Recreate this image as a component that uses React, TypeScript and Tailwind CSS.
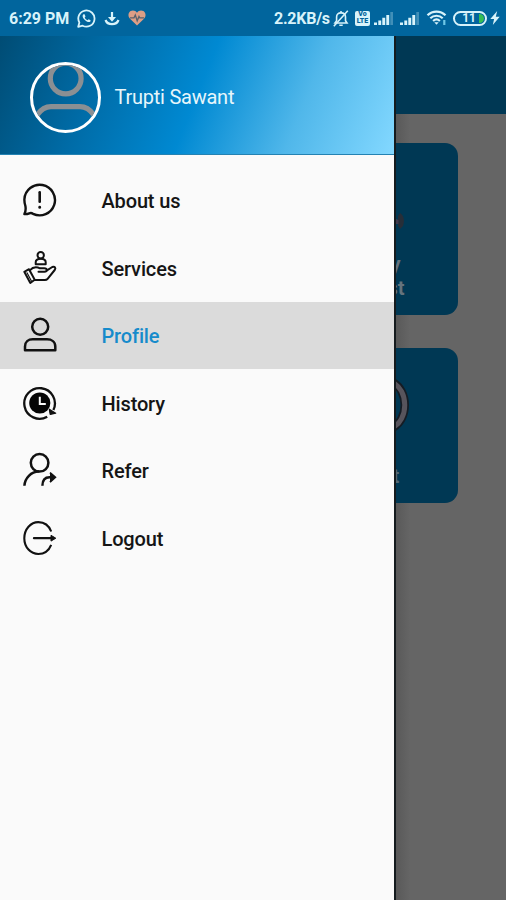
import type { ReactNode } from 'react';
import { clsx } from 'clsx';

interface MenuItem {
  key: string;
  label: string;
  icon: ReactNode;
}

const AboutIcon = () => (
  <svg className="w-9 h-9" viewBox="0 0 36 36" fill="none" stroke="#111" strokeWidth="2.4" strokeLinecap="round" strokeLinejoin="round">
    <path d="M2.4 17.2A15.3 15.3 0 1 1 11 31.8C9.5 30.7 8.5 30.8 7.3 31.3C5.6 32 4 32.3 2.4 32.1C3.5 30 4 27.5 3.4 24C2.6 21.5 2.3 19.5 2.4 17.2Z" />
    <path d="M17.7 10.3V19.8" strokeWidth="2.6" />
    <path d="M17.7 25.2V25.4" strokeWidth="2.8" />
  </svg>
);

const ServicesIcon = () => (
  <svg className="w-9 h-9" viewBox="0 0 36 36" fill="none" stroke="#111" strokeWidth="2" strokeLinecap="round" strokeLinejoin="round">
    <circle cx="18.7" cy="5.2" r="3.2" />
    <path d="M13.7 14.2V12.3C13.7 9.6 15.7 8.7 18.7 8.7C21.7 8.7 23.7 9.6 23.7 12.3V14.2Z" />
    <path d="M2.3 21.8L7 19.2L12.7 29.8L8.3 33Z" />
    <path d="M5 22.8L9.4 31" strokeWidth="1.2" />
    <path d="M7.8 20.3C10.4 17.4 14 16.4 18 18.3H22.3C25.6 18.3 25.4 21.8 22.5 21.8H16.5" />
    <path d="M25 20.3L30.3 17C32.7 16 34.2 18.2 32.7 20L25.6 28.8C24.8 29.8 24 30 22.8 30H12.8" />
  </svg>
);

const ProfileIcon = () => (
  <svg className="w-9 h-9" viewBox="0 0 36 36" fill="none" stroke="#111" strokeWidth="2.5" strokeLinejoin="round">
    <circle cx="18.2" cy="9.8" r="8" />
    <path d="M3 33.2V29.5C3 24.8 6.3 22.3 10.8 22.3H25C29.5 22.3 33.3 24.8 33.3 29.5V33.2Z" />
  </svg>
);

const HistoryIcon = () => (
  <svg className="w-9 h-9" viewBox="0 0 36 36" fill="none" stroke="#111" strokeWidth="2.3">
    <path d="M31.4 25A15.3 15.3 0 1 0 25.2 31.7" />
    <path d="M27.3 24.2L33.7 28.2L28.2 29.4Z" fill="#111" strokeWidth="1.2" strokeLinejoin="round" />
    <circle cx="17.8" cy="18" r="10.6" fill="#050505" stroke="none" />
    <path d="M17.8 11.8V18.9H23.8" stroke="#fafafa" strokeWidth="2" />
  </svg>
);

const ReferIcon = () => (
  <svg className="w-9 h-9" viewBox="0 0 36 36" fill="none" stroke="#111" strokeWidth="2.5">
    <circle cx="17.6" cy="10.8" r="8.8" />
    <path d="M2.4 33.8C2.8 26.2 9 19.4 17.2 19.6" />
    <path d="M20.4 33.7C20.5 28.2 22.9 25.3 27.5 25.3H31" />
    <path d="M28 20.6L33.3 25.3L28 30.2" strokeLinejoin="miter" fill="#111" strokeWidth="1.8" />
  </svg>
);

const LogoutIcon = () => (
  <svg className="w-9 h-9" viewBox="0 0 36 36" fill="none" stroke="#111" strokeWidth="2.1">
    <path d="M29.2 11.5C26.8 5.2 21.8 2.1 16.3 2.1C8.8 2.1 2.3 9 2.3 18.2C2.3 27.4 8.8 34 16.3 34C21.8 34 26.8 30.8 29.2 24.9" />
    <path d="M12 18.2H30" strokeLinecap="round" strokeWidth="2.3" />
    <path d="M29 15.3L33.8 18.2L29 21.1Z" fill="#111" strokeWidth="1" />
  </svg>
);

const menuItems: MenuItem[] = [
  { key: 'about', label: 'About us', icon: <AboutIcon /> },
  { key: 'services', label: 'Services', icon: <ServicesIcon /> },
  { key: 'profile', label: 'Profile', icon: <ProfileIcon /> },
  { key: 'history', label: 'History', icon: <HistoryIcon /> },
  { key: 'refer', label: 'Refer', icon: <ReferIcon /> },
  { key: 'logout', label: 'Logout', icon: <LogoutIcon /> },
];

const SignalIcon = () => (
  <svg className="w-5 h-[15px]" viewBox="0 0 20 15" fill="#d8f3fa">
    <path d="M0 11.5H3V14H0ZM4.3 9.5H7.2V14H4.3ZM8.3 6.8H11.2V14H8.3ZM12.3 4H15.2V14H12.3Z" />
    <path d="M16.3 1H19V14H16.3Z" opacity="0.3" />
  </svg>
);

const StatusBar = () => (
  <div className="h-9 shrink-0 bg-[#01659d] flex items-center text-[#d8f3fa]">
    <span className="ml-[9px] pt-[2px] w-[61px] text-[16px] leading-5 font-bold whitespace-nowrap">6:29 PM</span>
    <svg className="ml-[7px] w-[19px] h-[19px]" viewBox="0 0 19 19" fill="none" stroke="currentColor" strokeWidth="1.8">
      <path d="M1.2 17.8L2.4 13.6A8.1 8.1 0 1 1 5.6 16.7Z" strokeLinejoin="round" />
      <path d="M6.4 5.2C5 6.4 5.5 8.5 7.6 10.7C9.8 13 12 13.8 13.4 12.5L13.6 11.3L11.6 10.3L10.6 11.3C9.3 10.8 8.3 9.8 7.7 8.5L8.5 7.5L7.6 5.2Z" fill="currentColor" stroke="none" />
    </svg>
    <svg className="ml-2 w-4 h-[15px]" viewBox="0 0 16 15" fill="none" stroke="currentColor" strokeWidth="2.2">
      <path d="M8 1V9" />
      <path d="M4 6H12L8 10.8Z" fill="currentColor" stroke="none" />
      <path d="M1.5 9C3.5 14.5 12.5 14.5 14.5 9" />
    </svg>
    <svg className="ml-2 w-[18px] h-4" viewBox="0 0 18 16">
      <path d="M9 15.6L2 8.7C-0.4 6.2 0.2 2.6 2.6 1.1C4.9 -0.2 7.6 0.5 9 2.8C10.4 0.5 13.1 -0.2 15.4 1.1C17.8 2.6 18.4 6.2 16 8.7Z" fill="#dc9e86" />
      <path d="M2 7.8H6L7.3 5L9.2 10.8L11 6.5L11.8 7.8H16" fill="none" stroke="#57626d" strokeWidth="1.3" />
    </svg>

    <span className="ml-[128px] pt-[2px] w-[56px] text-[16px] leading-5 font-bold whitespace-nowrap tracking-[-0.25px]">2.2KB/s</span>
    <svg className="ml-[3px] w-4 h-[17px]" viewBox="0 0 16 17" fill="none" stroke="currentColor" strokeWidth="1.6">
      <path d="M2 13H14L12.5 10.8V7C12.5 4.4 10.9 2.9 8 2.9C5.1 2.9 3.6 4.5 3.6 7V10.8Z" />
      <path d="M6.3 15.2H9.7M8 1V3M0.8 16.2L14.8 0.8" />
    </svg>
    <span className="ml-[6px] w-[15px] h-[15px] rounded-[2px] bg-[#d8f3fa] text-[#01659d] text-[7px] leading-[7px] font-black text-center flex flex-col items-center justify-center">
      <span>Vo</span>
      <span>LTE</span>
    </span>
    <span className="ml-[4px] flex gap-[6px]">
      <SignalIcon />
      <SignalIcon />
    </span>
    <svg className="ml-[6px] w-[22px] h-4" viewBox="0 0 21 16" fill="none" stroke="currentColor" strokeWidth="2.2">
      <path d="M1 5.2C6 0.3 14 0.3 19 5.2M3.8 8.2C7.3 4.9 12.7 4.9 16.2 8.2M6.6 11C8.6 9.2 11.4 9.2 13.4 11" />
      <path d="M7.8 12.3H12.2L10 14.8Z" fill="currentColor" stroke="none" />
      <path d="M17.8 10V15" stroke="#6fc7e7" />
    </svg>
    <span className="ml-[5px] w-[34px] h-[15px] rounded-full border-2 border-[#d8f3fa] flex items-center justify-end overflow-hidden">
      <span className="text-[12px] leading-[11px] font-bold">11</span>
      <span className="ml-[3px] mr-px w-[5px] h-[9px] rounded-r-full bg-[#35be54]" />
    </span>
    <svg className="ml-[3px] w-[10px] h-[14px]" viewBox="0 0 10 14" fill="currentColor">
      <path d="M7.2 0L0.3 8H4.1L2.8 14L9.7 5.8H5.8Z" />
    </svg>
  </div>
);

const Drawer = () => (
  <div className="w-[394px] shrink-0 bg-[#fafafa] flex flex-col">
    <div className="h-[119px] pl-[29.5px] pt-[4px] flex items-center gap-[14px] border-b border-[#2482b2] bg-[linear-gradient(112deg,#004c74_0%,#006ba6_25%,#0089d2_50%,#50b7ea_75%,#83d8ff_100%)]">
      <div className="w-[71px] h-[71px] rounded-full border-[3px] border-white overflow-hidden">
        <svg className="w-[65px] h-[65px]" viewBox="0 0 65 65" fill="none" stroke="#8b8f93" strokeWidth="5.2">
          <circle cx="32.7" cy="13.5" r="15.4" />
          <path d="M4 50C8 44.5 12 41.6 18 41.6H47C53 41.6 57 44.5 61 50" />
        </svg>
      </div>
      <span className="text-[20px] leading-6 tracking-[-0.24px] text-[#e6f6fb]">Trupti Sawant</span>
    </div>

    <nav className="pt-[11.5px]">
      {menuItems.map((item) => {
        const active = item.key === 'profile';
        return (
          <div key={item.key} className={clsx('h-[67.5px] pl-[21.5px] flex items-center', active && 'bg-[#dbdbdb]')}>
            {item.icon}
            <span className={clsx('ml-11 pt-[2px] text-[20px] leading-6 font-medium tracking-[-0.15px]', active ? 'text-[#168bcb]' : 'text-[#151515]')}>
              {item.label}
            </span>
          </div>
        );
      })}
    </nav>
  </div>
);

// Visible edge of the home screen, dimmed behind the open drawer
const DimmedHome = () => (
  <div className="flex-1 min-w-0 overflow-hidden bg-[#656565] flex">
    <div className="w-[1.5px] shrink-0 bg-[#151b1e]" />
    <div className="flex-1 flex flex-col">
      <div className="h-[78px] bg-[#003854]" />
      <div className="flex flex-col flex-1 bg-[linear-gradient(90deg,#595959_0,#656565_14px)]">
        <div className="mt-[29px] w-[62px] h-[172px] rounded-r-[13px] bg-[#003854] flex flex-col overflow-hidden">
          <svg className="mt-[67px] w-3 h-6" viewBox="0 0 12 24">
            <path d="M4 3C7.5 5 9 10 7 16L4 19L2 16V6Z" fill="#272e38" />
            <path d="M0 9L2.5 10V14H0Z" fill="#40394d" />
          </svg>
          <div className="mt-[18px] flex flex-col text-[20px] leading-6 font-bold text-[#65737d]">
            <span className="-ml-[5px]">y</span>
            <span className="-ml-[8px]">st</span>
          </div>
        </div>
        <div className="mt-[33px] w-[62px] h-[155px] rounded-r-[13px] bg-[#003854] flex flex-col overflow-hidden">
          <svg className="mt-[30px] w-[15px] h-[54px]" viewBox="0 0 15 54" fill="none">
            <path d="M-4 4C13 12 13 42 -4 50" stroke="#151c24" strokeWidth="8.5" />
            <path d="M-4 4C13 12 13 42 -4 50" stroke="#57545c" strokeWidth="5" />
          </svg>
          <span className="mt-8 -ml-[3px] text-[20px] leading-6 font-bold text-[#526976]">t</span>
        </div>
      </div>
    </div>
  </div>
);

export default function App() {
  return (
    <div className="w-[506px] h-[900px] flex flex-col overflow-hidden font-[Roboto,sans-serif]">
      <StatusBar />
      <div className="flex-1 min-h-0 flex">
        <Drawer />
        <DimmedHome />
      </div>
    </div>
  );
}
